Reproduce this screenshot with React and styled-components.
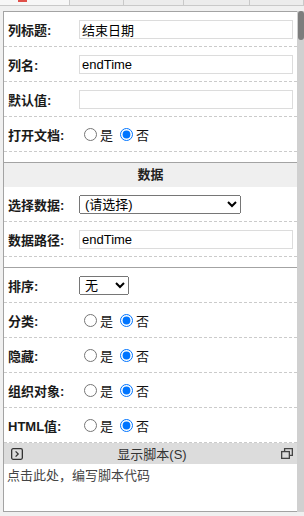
import React from 'react'
import styled, {createGlobalStyle} from 'styled-components'


const Global = createGlobalStyle`
	html, body {
		margin: 0;
		padding: 0;
		background: #f0f0f0;
	}
	body {
		font-family: "Liberation Sans", "Noto Sans CJK SC", sans-serif;
		font-size: 13px;
		color: #1a1a1a;
	}
	* { box-sizing: border-box; }
`

const Screen = styled.div`
	display: flex;
	flex-direction: column;
	height: 516px;
	width: 304px;
	overflow: hidden;
	background: #f0f0f0;
`

const TabStrip = styled.div`
	display: flex;
	height: 6px;
	margin-bottom: 5px;
	border-bottom: 1px solid #c9c9c9;
`

const Tab = styled.div`
	position: relative;
	width: ${props => props.width}px;
	border-right: 1px solid #c9c9c9;
	background: ${props => props.active ? '#f7f7f7' : '#ececec'};
`

const TabMark = styled.span`
	position: absolute;
	left: 18px;
	top: 0;
	width: 9px;
	height: 2px;
	background: #e0504a;
`

const Body = styled.div`
	display: flex;
	flex: 1;
	padding-left: 3px;
	padding-bottom: 4px;
`

const Main = styled.div`
	display: flex;
	flex-direction: column;
	flex: 1;
	background: #fff;
	border: 1px solid #a3a3a3;
	border-right: none;
`

const PropList = styled.div`
	display: flex;
	flex-direction: column;
`

const Group = styled.div`
	padding-bottom: ${props => props.last ? '0' : '10'}px;
	border-bottom: ${props => props.last ? 'none' : '1px solid #a3a3a3'};
`

const GroupTitle = styled.div`
	height: 24px;
	line-height: 24px;
	text-align: center;
	font-weight: bold;
	background: #efefef;
	color: #222;
`

const Row = styled.div`
	display: flex;
	align-items: center;
	height: 35px;
	padding: 0 4px 0 4px;
	border-bottom: 1px dashed #cbcbcb;
`

const Label = styled.label`
	flex: 0 0 71px;
	font-weight: bold;
	color: #1a1a1a;
	white-space: nowrap;
`

const Value = styled.div`
	display: flex;
	align-items: center;
	flex: 1;
	min-width: 0;
`

const TextInput = styled.input`
	width: 100%;
	height: 19px;
	padding: 0 2px;
	border: 1px solid #dcdcdc;
	background: #fff;
	font-family: "Liberation Sans", "Noto Sans CJK SC", sans-serif;
	font-size: 13px;
	color: #000;
	outline: none;
`

const Select = styled.select`
	width: ${props => props.width}px;
	height: 19px;
	font-family: "Liberation Sans", "Noto Sans CJK SC", sans-serif;
	font-size: 13px;
	color: #000;
	padding: 0 0 0 1px;
`

const RadioLabel = styled.label`
	display: inline-flex;
	align-items: center;
	margin-right: 2px;
	color: #111;
	& > input {
		margin: 0 3px 0 5px;
		width: 13px;
		height: 13px;
	}
`

const ScriptPanel = styled.div`
	display: flex;
	flex-direction: column;
	flex: 1;
`

const ScriptBar = styled.div`
	display: grid;
	grid-template-columns: 1fr auto 1fr;
	align-items: center;
	height: 21px;
	padding: 0 4px 0 7px;
	background: #dcdcdc;
	color: #333;
`

const BarIcon = styled.span`
	display: flex;
	justify-self: ${props => props.end ? 'end' : 'start'};
`

const Editor = styled.div`
	flex: 1;
	padding: 4px 3px;
	line-height: 16px;
	color: #444;
	cursor: text;
`

const ScrollTrack = styled.div`
	flex: 0 0 7px;
	background: #d0d0d0;
	padding-left: 1px;
`

const Thumb = styled.div`
	height: 29px;
	background: #7d7d7d;
	border-radius: 3px;
`


const YesNo = ({ name }) => (
	<Value>
		<RadioLabel><input type="radio" name={name} />是</RadioLabel>
		<RadioLabel><input type="radio" name={name} defaultChecked />否</RadioLabel>
	</Value>
)

const TextRow = ({ label, value }) => (
	<Row>
		<Label>{label}</Label>
		<Value><TextInput defaultValue={value} /></Value>
	</Row>
)

const RadioRow = ({ label, name }) => (
	<Row>
		<Label>{label}</Label>
		<YesNo name={name} />
	</Row>
)


export default function App() {
	return (
		<Screen>
			<Global />
			<TabStrip>
				<Tab width={70} active><TabMark /></Tab>
				<Tab width={54} />
				<Tab width={60} />
				<Tab width={66} />
				<Tab width={54} />
			</TabStrip>
			<Body>
				<Main>
					<PropList>
						<Group>
							<TextRow label="列标题:" value="结束日期" />
							<TextRow label="列名:" value="endTime" />
							<TextRow label="默认值:" value="" />
							<RadioRow label="打开文档:" name="openDoc" />
						</Group>
						<Group>
							<GroupTitle>数据</GroupTitle>
							<Row>
								<Label>选择数据:</Label>
								<Value>
									<Select width={162} defaultValue="">
										<option value="">(请选择)</option>
									</Select>
								</Value>
							</Row>
							<TextRow label="数据路径:" value="endTime" />
						</Group>
						<Group last>
							<Row>
								<Label>排序:</Label>
								<Value>
									<Select width={50} defaultValue="none">
										<option value="none">无</option>
										<option value="asc">升序</option>
										<option value="desc">降序</option>
									</Select>
								</Value>
							</Row>
							<RadioRow label="分类:" name="group" />
							<RadioRow label="隐藏:" name="hidden" />
							<RadioRow label="组织对象:" name="org" />
							<RadioRow label="HTML值:" name="html" />
						</Group>
					</PropList>
					<ScriptPanel>
						<ScriptBar>
							<BarIcon>
								<svg width="12" height="12" viewBox="0 0 12 12" fill="none" stroke="#333" strokeWidth="1.3">
									<rect x="0.65" y="0.65" width="10.7" height="10.7" rx="1.5" />
									<path d="M4.6 3.4 L7.2 6 L4.6 8.6" />
								</svg>
							</BarIcon>
							<span>显示脚本(S)</span>
							<BarIcon end>
								<svg width="12" height="11" viewBox="0 0 12 11" fill="none" stroke="#444" strokeWidth="1.3">
									<path d="M3.6 3 V0.65 H11.35 V7.4 H8.4" />
									<rect x="0.65" y="3.6" width="7.7" height="6.75" fill="#dcdcdc" />
								</svg>
							</BarIcon>
						</ScriptBar>
						<Editor>点击此处，编写脚本代码</Editor>
					</ScriptPanel>
				</Main>
				<ScrollTrack><Thumb /></ScrollTrack>
			</Body>
		</Screen>
	)
}
